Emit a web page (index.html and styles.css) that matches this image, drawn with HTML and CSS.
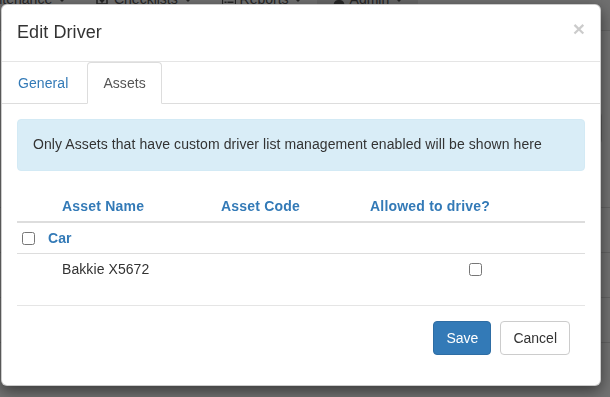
FILE: index.html
```html
<!DOCTYPE html>
<html>
<head>
<meta charset="utf-8">
<title>Edit Driver</title>
<link rel="stylesheet" href="styles.css">
</head>
<body>
<div class="page">
  <nav class="navbar">
    <ul class="nav-items">
      <li><a>Maintenance <span class="caret"></span></a></li>
      <li><a><svg class="ico" viewBox="0 0 14 14"><rect x="1" y="2" width="10" height="10" fill="none" stroke="currentColor" stroke-width="1.6"/><path d="M3.5 6.5 L6 9.5 L13 1.5" fill="none" stroke="currentColor" stroke-width="2.2"/></svg> Checklists <span class="caret"></span></a></li>
      <li><a><svg class="ico" viewBox="0 0 14 14"><rect x="0.5" y="1" width="13" height="12" fill="none" stroke="currentColor" stroke-width="1.2"/><rect x="2.5" y="3.5" width="2" height="1.5" fill="currentColor"/><rect x="5.5" y="3.5" width="6" height="1.5" fill="currentColor"/><rect x="2.5" y="6.5" width="2" height="1.5" fill="currentColor"/><rect x="5.5" y="6.5" width="6" height="1.5" fill="currentColor"/><rect x="2.5" y="9.5" width="2" height="1.5" fill="currentColor"/><rect x="5.5" y="9.5" width="6" height="1.5" fill="currentColor"/></svg> Reports <span class="caret"></span></a></li>
      <li class="open"><a><svg class="ico" viewBox="0 0 14 14"><circle cx="7" cy="4" r="3.3" fill="currentColor"/><path d="M1.5 14 C1.5 9 4 8 7 8 C10 8 12.5 9 12.5 14 Z" fill="currentColor"/></svg> Admin <span class="caret"></span></a></li>
    </ul>
  </nav>
  <div class="bg-content">
    <div class="bg-tools"><span class="bg-box"></span></div>
    <div class="bg-rows">
      <div class="bg-row"></div>
      <div class="bg-row"></div>
      <div class="bg-row"></div>
      <div class="bg-row"></div>
    </div>
  </div>
</div>

<div class="backdrop"></div>

<div class="modal">
  <div class="modal-content">
    <div class="modal-header">
      <button class="close" type="button">×</button>
      <h4 class="modal-title">Edit Driver</h4>
    </div>
    <ul class="nav-tabs">
      <li><a>General</a></li>
      <li class="active"><a>Assets</a></li>
    </ul>
    <div class="tab-pane">
      <div class="alert">Only Assets that have custom driver list management enabled will be shown here</div>
      <table class="table">
        <colgroup>
          <col class="col-check">
          <col class="col-name">
          <col class="col-code">
          <col class="col-allowed">
        </colgroup>
        <thead>
          <tr>
            <th></th>
            <th>Asset Name</th>
            <th>Asset Code</th>
            <th>Allowed to drive?</th>
          </tr>
        </thead>
        <tbody>
          <tr class="group-row">
            <td colspan="4"><input type="checkbox" class="chk"><span class="group-name">Car</span></td>
          </tr>
          <tr>
            <td></td>
            <td>Bakkie X5672</td>
            <td></td>
            <td class="center"><input type="checkbox" class="chk"></td>
          </tr>
        </tbody>
      </table>
      <div class="modal-footer">
        <button class="btn btn-primary" type="button">Save</button>
        <button class="btn btn-default" type="button">Cancel</button>
      </div>
    </div>
  </div>
</div>
</body>
</html>
```

FILE: styles.css
```css
* {
  box-sizing: border-box;
}

html,
body {
  margin: 0;
  padding: 0;
}

body {
  font-family: "Liberation Sans", Arial, Helvetica, sans-serif;
  font-size: 14px;
  line-height: 1.42857;
  letter-spacing: 0.08px;
  color: #333;
  background: #fff;
  overflow: hidden;
  width: 610px;
  height: 397px;
}

/* ---------- page behind the modal ---------- */
.page {
  height: 397px;
  overflow: hidden;
}

.navbar {
  margin-top: -26px;
  height: 57px;
  background: #f8f8f8;
  border-bottom: 1px solid #e0e0e0;
}

.nav-items {
  list-style: none;
  margin: 0 0 0 -43px;
  padding: 0;
  display: flex;
  letter-spacing: 0;
}

.nav-items a {
  display: block;
  padding: 15px;
  height: 56px;
  line-height: 20px;
  color: #555;
  white-space: nowrap;
}

.nav-items .open a {
  background: #e4e4e4;
}

.ico {
  width: 14px;
  height: 14px;
  vertical-align: -2px;
}

.caret {
  display: inline-block;
  width: 0;
  height: 0;
  margin-left: 2px;
  vertical-align: middle;
  border-top: 4px solid;
  border-left: 4px solid transparent;
  border-right: 4px solid transparent;
}

.bg-tools {
  display: flex;
  justify-content: flex-end;
  padding: 81px 8px 0 0;
  height: 150px;
}

.bg-box {
  width: 60px;
  height: 32px;
  border: 1px solid #ccc;
  border-radius: 4px;
}

.bg-rows {
  margin-top: 26px;
}

.bg-row {
  height: 45px;
  border-top: 1px solid #ddd;
}

/* ---------- backdrop ---------- */
.backdrop {
  position: fixed;
  inset: 0;
  background: #000;
  opacity: 0.55;
}

/* ---------- modal ---------- */
.modal {
  position: absolute;
  left: 1px;
  top: 4px;
  width: 600px;
}

.modal-content {
  background: #fff;
  border: 1px solid rgba(0, 0, 0, 0.2);
  border-radius: 6px;
  box-shadow: 0 5px 15px rgba(0, 0, 0, 0.5);
}

.modal-header {
  padding: 15px;
  border-bottom: 1px solid #e5e5e5;
}

.modal-title {
  margin: 0;
  font-size: 18px;
  font-weight: 500;
  line-height: 1.42857;
  color: #333;
}

.close {
  float: right;
  margin-top: -2px;
  padding: 0;
  border: 0;
  background: transparent;
  font-family: "Liberation Sans", Arial, sans-serif;
  font-size: 21px;
  font-weight: bold;
  line-height: 1;
  color: #000;
  opacity: 0.2;
}

.nav-tabs {
  list-style: none;
  margin: 0;
  padding: 0;
  display: flex;
  border-bottom: 1px solid #ddd;
}

.nav-tabs li {
  margin-bottom: -1px;
}

.nav-tabs a {
  display: block;
  margin-right: 3px;
  padding: 10px 15px;
  line-height: 20px;
  border: 1px solid transparent;
  border-radius: 4px 4px 0 0;
  color: #337ab7;
}

.nav-tabs .active a {
  color: #555;
  background: #fff;
  border-color: #ddd;
  border-bottom-color: transparent;
}

.tab-pane {
  padding: 15px;
}

.alert {
  padding: 15px;
  margin-bottom: 20px;
  border: 1px solid #d3eaf5;
  border-radius: 4px;
  background: #d9edf7;
  color: #333;
}

.table {
  width: 100%;
  table-layout: fixed;
  border-collapse: collapse;
  border-spacing: 0;
  margin-bottom: 21px;
}

.col-check {
  width: 40px;
}

.col-name {
  width: 159px;
}

.col-code {
  width: 149px;
}

.col-allowed {
  width: 220px;
}

.table th,
.table td {
  padding: 5px;
  line-height: 20px;
  vertical-align: top;
  text-align: left;
  border-top: 1px solid #ddd;
}

.table thead th {
  border-top: 0;
  border-bottom: 2px solid #ddd;
  vertical-align: bottom;
  font-weight: bold;
  color: #337ab7;
  letter-spacing: 0.2px;
}

.table td.center {
  text-align: center;
}

.chk {
  width: 13px;
  height: 13px;
  margin: 4px 0 0;
  vertical-align: top;
}

.group-name {
  margin-left: 13px;
  font-weight: bold;
  color: #337ab7;
}

.modal-footer {
  display: flex;
  justify-content: flex-end;
  gap: 9px;
  padding: 15px;
  border-top: 1px solid #e5e5e5;
}

.btn {
  padding: 6px 12px;
  font-family: "Liberation Sans", Arial, sans-serif;
  font-size: 14px;
  line-height: 20px;
  border: 1px solid transparent;
  border-radius: 4px;
}

.btn-primary {
  color: #fff;
  background: #337ab7;
  border-color: #2e6da4;
}

.btn-default {
  color: #333;
  background: #fff;
  border-color: #ccc;
}
```
